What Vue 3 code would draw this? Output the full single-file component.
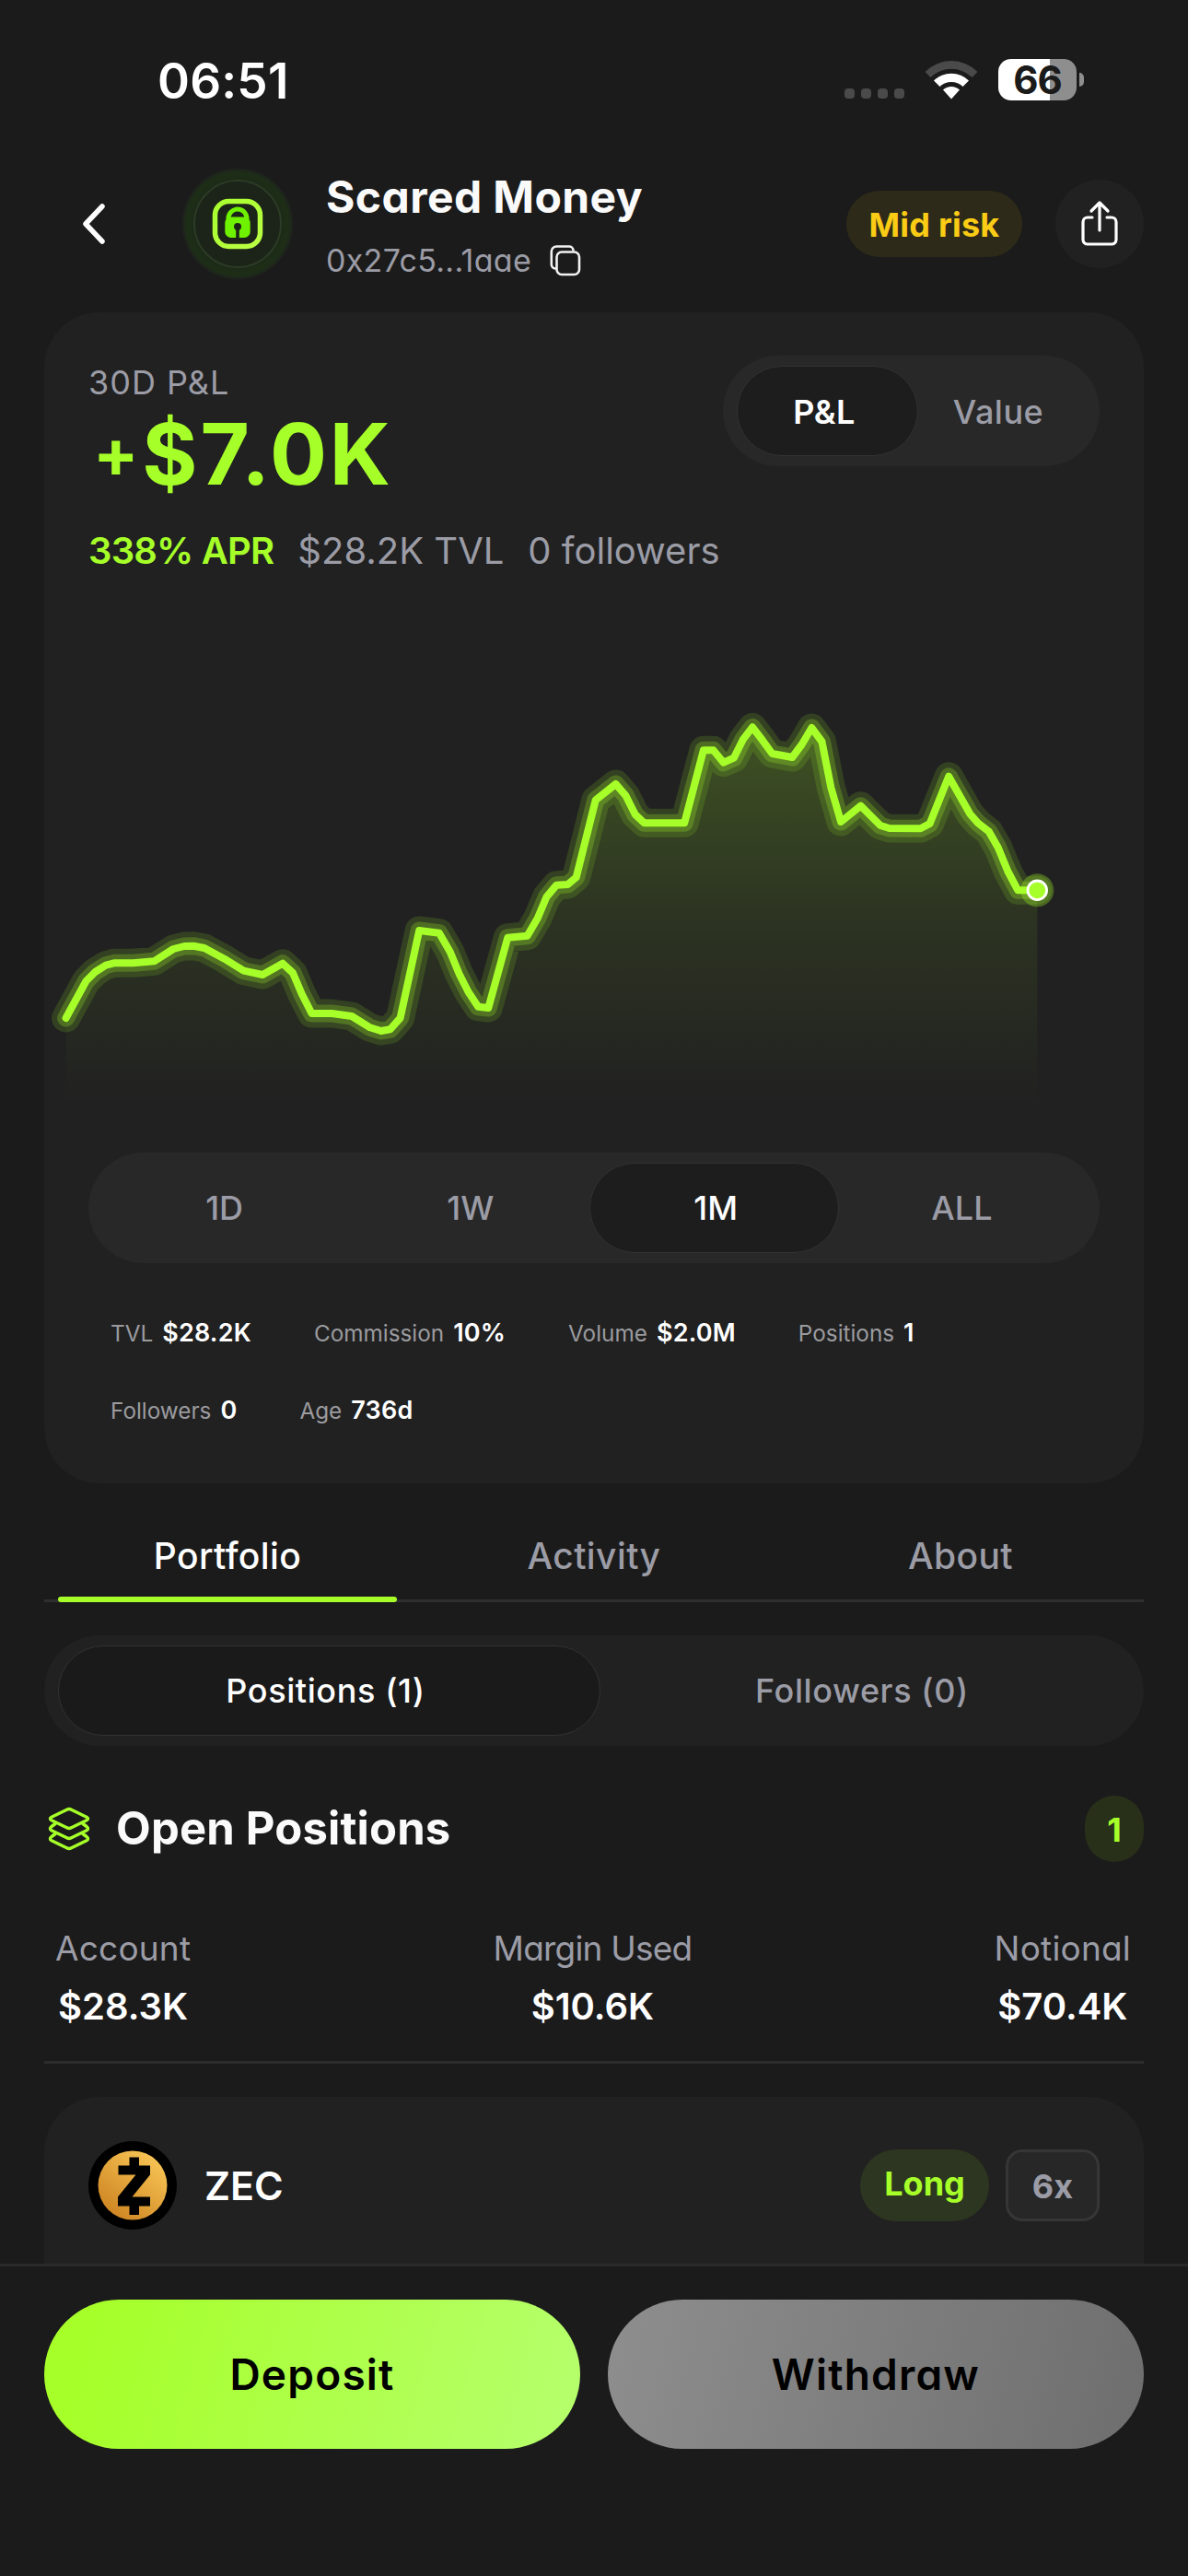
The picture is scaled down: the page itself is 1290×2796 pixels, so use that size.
<template>
  <div class="screen">
    <div class="status">
      <span class="time">06:51</span>
      <div class="status-icons">
        <div class="dots"><i v-for="n in 4" :key="n"></i></div>
        <svg class="wifi" width="58" height="43" viewBox="0 0 58 43">
          <path d="M0.5 13 A40 40 0 0 1 57.5 13 L51.5 19 A32 32 0 0 0 6.500 19 Z" fill="#4a4a4a" />
          <path d="M10 22.500 A27 27 0 0 1 48 22.500 L41.500 29 A18 18 0 0 0 16.500 29 Z" fill="#fff" />
          <path d="M20 32.500 A13 13 0 0 1 38 32.500 L29 42.500 Z" fill="#fff" />
        </svg>
        <div class="battery">
          <div class="cell">66</div>
          <div class="nub"></div>
        </div>
      </div>
    </div>

    <header class="header">
      <button class="back" aria-label="Back">
        <svg width="30" height="48" viewBox="0 0 30 48">
          <path d="M24 5 L6 24 L24 43" fill="none" stroke="#fff" stroke-width="5.500" stroke-linecap="round" stroke-linejoin="round" />
        </svg>
      </button>
      <svg class="avatar" width="122" height="122" viewBox="0 0 122 122">
        <defs>
          <radialGradient id="halo">
            <stop offset="0.76" stop-color="#1c2918" />
            <stop offset="0.9" stop-color="#1d2e16" />
            <stop offset="0.95" stop-color="#1e2a1a" />
            <stop offset="1" stop-color="#1d1f1d" />
          </radialGradient>
          <linearGradient id="frame" x1="0" y1="0" x2="1" y2="1">
            <stop offset="0" stop-color="#a8ff2e" />
            <stop offset="1" stop-color="#baff45" />
          </linearGradient>
        </defs>
        <circle cx="61" cy="61" r="60.500" fill="url(#halo)" />
        <circle cx="61" cy="61" r="47" fill="#1c2419" stroke="#2b3b25" stroke-width="2" />
        <rect x="36.500" y="36.500" width="49" height="49" rx="15" fill="#1c2419" stroke="url(#frame)" stroke-width="5.500" />
        <path d="M51 57 v-2 a10 10 0 0 1 20 0 v2" fill="none" stroke="#6ff200" stroke-width="5" />
        <rect x="47.300" y="53.500" width="27.400" height="22.500" rx="6.500" fill="#6ff200" />
        <circle cx="61" cy="64" r="4" fill="#1c2419" />
        <rect x="59.200" y="66" width="3.600" height="10.500" fill="#1c2419" />
      </svg>
      <div class="who">
        <div class="name">Scared Money</div>
        <div class="address">
          <span>0x27c5...1aae</span>
          <svg width="34" height="34" viewBox="0 0 34 34" fill="none" stroke="#f2f2f2" stroke-width="2.600">
            <path d="M6 25.500 A4.500 4.500 0 0 1 1.800 21 V7 A5.500 5.500 0 0 1 7.300 1.500 H21 A4.500 4.500 0 0 1 25.500 5.500" stroke-linecap="round" />
            <rect x="7.500" y="7.500" width="24.500" height="24.500" rx="5.500" />
          </svg>
        </div>
      </div>
      <div class="risk">Mid risk</div>
      <button class="share" aria-label="Share">
        <svg width="42" height="52" viewBox="0 0 42 52" fill="none" stroke="#fff" stroke-width="3.200" stroke-linecap="round" stroke-linejoin="round">
          <path d="M13 19 H8 A5 5 0 0 0 3 24 V43 A5 5 0 0 0 8 48 H34 A5 5 0 0 0 39 43 V24 A5 5 0 0 0 34 19 H29" />
          <path d="M21 33 V3.500 M12 12 L21 3 L30 12" />
        </svg>
      </button>
    </header>

    <section class="card">
      <div class="card-top">
        <div class="summary">
          <div class="label">30D P&amp;L</div>
          <div class="pnl"><span class="sign">+</span>$7.0K</div>
          <div class="meta">
            <span class="apr">338% APR</span>
            <span class="tvl">$28.2K TVL</span>
            <span class="fol">0 followers</span>
          </div>
        </div>
        <div class="toggle">
          <div class="toggle-item active">P&amp;L</div>
          <div class="toggle-item">Value</div>
        </div>
      </div>

      <svg class="chart" width="1194" height="631" viewBox="48 620 1194 631">
        <defs>
          <linearGradient id="area" gradientUnits="userSpaceOnUse" x1="0" y1="790" x2="0" y2="1200">
            <stop offset="0" stop-color="#a6ff29" stop-opacity="0.22" />
            <stop offset="0.5" stop-color="#a6ff29" stop-opacity="0.085" />
            <stop offset="1" stop-color="#a6ff29" stop-opacity="0" />
          </linearGradient>
        </defs>
        <path :d="areaPath" fill="url(#area)" />
        <g fill="none" stroke="#a6ff29" stroke-linecap="round" stroke-linejoin="round">
          <path :d="linePath" stroke-width="31" stroke-opacity="0.14" />
          <path :d="linePath" stroke-width="19" stroke-opacity="0.24" />
          <path :d="linePath" stroke-width="8" />
        </g>
        <circle :cx="last[0]" :cy="last[1]" r="18" fill="#a6ff29" fill-opacity="0.3" />
        <circle :cx="last[0]" :cy="last[1]" r="10.300" fill="#a6ff29" stroke="#fff" stroke-width="2.800" />
      </svg>

      <div class="periods">
        <div v-for="p in periods" :key="p" class="period" :class="{ active: p === '1M' }">{{ p }}</div>
      </div>

      <div class="stats">
        <div v-for="s in stats" :key="s.label" class="stat">
          <span class="stat-label">{{ s.label }}</span>
          <span class="stat-value">{{ s.value }}</span>
        </div>
      </div>
    </section>

    <nav class="tabs">
      <div class="tab active">Portfolio</div>
      <div class="tab">Activity</div>
      <div class="tab">About</div>
    </nav>

    <div class="segments">
      <div class="segment active">Positions (1)</div>
      <div class="segment">Followers (0)</div>
    </div>

    <div class="section-head">
      <svg width="54" height="54" viewBox="0 0 54 54" fill="none" stroke="#a6ff29" stroke-width="3.500" stroke-linejoin="round" stroke-linecap="round">
        <path d="M24.500 6.200 Q27 4.800 29.500 6.200 L46 14.300 Q49 16 46 17.700 L29.500 25.800 Q27 27.200 24.500 25.800 L8 17.700 Q5 16 8 14.300 Z" />
        <path d="M12 21.500 L8 24.500 Q5 27 8 28.700 L24.500 36.800 Q27 38.200 29.500 36.800 L46 28.700 Q49 27 46 24.500 L42 21.500" />
        <path d="M12 32.500 L8 35.500 Q5 38 8 39.700 L24.500 47.800 Q27 49.200 29.500 47.800 L46 39.700 Q49 38 46 35.500 L42 32.500" />
      </svg>
      <h2>Open Positions</h2>
      <div class="count">1</div>
    </div>

    <div class="totals">
      <div v-for="t in totals" :key="t.label" class="total">
        <div class="total-label">{{ t.label }}</div>
        <div class="total-value">{{ t.value }}</div>
      </div>
    </div>

    <section class="position">
      <svg width="96" height="96" viewBox="0 0 96 96">
        <defs>
          <linearGradient id="zec" x1="0.8" y1="0.1" x2="0.2" y2="0.9">
            <stop offset="0" stop-color="#f6c253" />
            <stop offset="1" stop-color="#cf8724" />
          </linearGradient>
        </defs>
        <circle cx="48" cy="48" r="48" fill="#000" />
        <circle cx="48" cy="48" r="37.500" fill="url(#zec)" />
        <path d="M44.500 17.500 h10.500 v9 h12 v10 L47.500 60.500 h19.500 v10 h-12 v9.500 h-10.500 v-9.500 h-12.500 v-10 L51.500 36.500 h-19 v-10 h12 z" fill="#000" />
      </svg>
      <span class="symbol">ZEC</span>
      <span class="side">Long</span>
      <span class="leverage">6x</span>
    </section>

    <footer class="footer">
      <button class="cta deposit">Deposit</button>
      <button class="cta withdraw">Withdraw</button>
    </footer>
  </div>
</template>

<script setup>
const points = [
  [71.6, 1105], [93.4, 1065], [103.3, 1055], [115, 1047.7], [123.8, 1045.3], [144.8, 1045.3],
  [167.3, 1043.3], [188.3, 1030], [200, 1027], [210, 1026.7], [221.9, 1029], [243.6, 1040.7],
  [264.6, 1053.7], [285.2, 1058], [306.9, 1045.7], [318, 1056], [327.9, 1079.3], [338.5, 1100],
  [360.3, 1100], [382, 1103], [401.8, 1115.3], [413.7, 1119], [423.6, 1117.3], [434.6, 1105],
  [455.2, 1010], [476.9, 1012.7], [488.8, 1033.3], [498.7, 1057.3], [508.6, 1076.7], [519.2, 1092.7],
  [530.3, 1094], [551.3, 1017.7], [572.6, 1015.7], [583.7, 996.7], [593.6, 973.3], [604.3, 960.7],
  [616.5, 960], [625.7, 952.2], [646.8, 868.3], [668.6, 851], [679.3, 863.3], [689.7, 884],
  [699.6, 893.3], [743.2, 893.3], [763.9, 814.3], [774.6, 814.3], [785.7, 827.7], [796.8, 822.7],
  [806.8, 802.7], [817, 789.3], [827.8, 803.3], [838.5, 818], [860.3, 822], [870.7, 808],
  [881.4, 790], [892.5, 805], [902.4, 855], [913.1, 892], [934.6, 874.7], [956, 896],
  [965.6, 899], [999.6, 899.3], [1009.6, 894], [1030.2, 842.7], [1053.2, 883.3], [1062, 893.3],
  [1073.9, 902.7], [1083.8, 920], [1094.5, 946], [1105.3, 966.3], [1126.3, 966.3]
]
const last = points[points.length - 1]
const linePath = 'M' + points.map(p => p.join(',')).join(' L')
const areaPath = `${linePath} L${last[0]},1200 L${points[0][0]},1200 Z`

const periods = ['1D', '1W', '1M', 'ALL']

const stats = [
  { label: 'TVL', value: '$28.2K' },
  { label: 'Commission', value: '10%' },
  { label: 'Volume', value: '$2.0M' },
  { label: 'Positions', value: '1' },
  { label: 'Followers', value: '0' },
  { label: 'Age', value: '736d' }
]

const totals = [
  { label: 'Account', value: '$28.3K' },
  { label: 'Margin Used', value: '$10.6K' },
  { label: 'Notional', value: '$70.4K' }
]
</script>

<style>
body {
  background: #1b1b1b;
}
</style>

<style scoped>
.screen {
  width: 1290px;
  height: 2796px;
  overflow: hidden;
  background: #1b1b1b;
  color: #fff;
  font-family: Inter, "Liberation Sans", sans-serif;
  font-feature-settings: "cv11" 1;
  display: flex;
  flex-direction: column;
  white-space: nowrap;
}

.screen > * {
  flex-shrink: 0;
}

button {
  border: 0;
  padding: 0;
  background: none;
  font: inherit;
  font-feature-settings: inherit;
  color: inherit;
}

svg {
  display: block;
  flex-shrink: 0;
}

/* Status bar */
.status {
  height: 173px;
  padding: 0 113px 0 171px;
  display: flex;
  align-items: center;
  justify-content: space-between;
}

.time {
  font-size: 53px;
  font-weight: 600;
  letter-spacing: 0.2px;
  line-height: 60px;
  padding-top: 2px;
}

.status-icons {
  display: flex;
  align-items: center;
}

.dots {
  display: flex;
  gap: 7px;
  padding-top: 30px;
}

.dots i {
  width: 11px;
  height: 11px;
  border-radius: 4px;
  background: #4a4a4a;
}

.wifi {
  margin: 0 22px;
}

.battery {
  display: flex;
  align-items: center;
  gap: 3px;
}

.cell {
  width: 85px;
  height: 45px;
  border-radius: 14px;
  background: linear-gradient(90deg, #fff 66%, #8e8e8e 66%);
  color: #1b1b1b;
  font-size: 42px;
  font-weight: 700;
  line-height: 46px;
  text-align: center;
  letter-spacing: -1px;
}

.nub {
  width: 5px;
  height: 15px;
  border-radius: 0 5px 5px 0;
  background: #8e8e8e;
}

/* Header */
.header {
  height: 120px;
  margin-top: 10px;
  padding: 0 48px;
  display: flex;
  align-items: center;
}

.back {
  width: 108px;
  height: 108px;
  display: flex;
  align-items: center;
  justify-content: center;
}

.avatar {
  margin-left: 41px;
}

.who {
  margin-left: 35px;
  padding-top: 10px;
}

.name {
  font-size: 48px;
  font-weight: 700;
  letter-spacing: 0.4px;
  line-height: 61px;
  color: #fafafa;
}

.address {
  display: flex;
  align-items: center;
  gap: 20px;
  margin-top: 9px;
  font-size: 34px;
  letter-spacing: 0.3px;
  line-height: 60px;
  color: #9b9ca6;
}

.risk {
  margin-left: auto;
  width: 191px;
  height: 72px;
  border-radius: 36px;
  background: #2e2a19;
  color: #facc15;
  font-size: 36px;
  font-weight: 700;
  letter-spacing: 0.2px;
  line-height: 74px;
  text-align: center;
}

.share {
  width: 96px;
  height: 96px;
  margin-left: 36px;
  border-radius: 50%;
  background: #212121;
  display: flex;
  align-items: center;
  justify-content: center;
}

/* Chart card */
.card {
  height: 1271px;
  margin: 36px 48px 0;
  padding: 47px 48px 0;
  box-sizing: border-box;
  border-radius: 60px;
  background: #212121;
}

.card-top {
  display: flex;
  justify-content: space-between;
  height: 234px;
}

.summary {
  padding-top: 7px;
}

.label {
  font-size: 36px;
  letter-spacing: 1px;
  line-height: 44px;
  color: #9b9ca6;
}

.pnl {
  height: 100px;
  margin-top: 6px;
  padding-left: 5px;
  font-size: 92px;
  font-weight: 700;
  letter-spacing: 2.8px;
  line-height: 100px;
  color: #a6ff29;
}

.sign {
  margin-right: 1px;
  font-size: 73px;
  line-height: 1;
  vertical-align: 8px;
}

.meta {
  display: flex;
  gap: 26px;
  margin-top: 33px;
  font-size: 40px;
  line-height: 44px;
  color: #9b9ca6;
}

.apr {
  color: #a6ff29;
  font-weight: 600;
  letter-spacing: -0.8px;
}

.toggle,
.periods,
.segments {
  height: 120px;
  box-sizing: border-box;
  border-radius: 60px;
  background: #282828;
  padding: 11px 15px;
  font-feature-settings: normal;
  font-weight: 500;
  font-size: 36px;
  color: #9b9ca6;
}

.toggle {
  width: 409px;
  display: flex;
}

.toggle-item,
.period,
.segment {
  flex: 1;
  height: 98px;
  box-sizing: border-box;
  border: 1px solid transparent;
  border-radius: 49px;
  line-height: 97px;
  text-align: center;
}

.toggle-item.active,
.period.active,
.segment.active {
  background: #1d1d1d;
  border-color: #323232;
  color: #fff;
}

.toggle-item {
  flex: 0 0 174px;
  letter-spacing: 0.5px;
  line-height: 99px;
}

.toggle-item.active {
  flex: 0 0 197px;
  padding-right: 7px;
  font-weight: 600;
}

.period.active {
  margin-left: -5px;
  padding-left: 4px;
}

.chart {
  margin: 0 -48px;
}

.periods,
.segments {
  display: flex;
}

.periods {
  padding: 11px 16px 11px 14px;
}

.stats {
  display: flex;
  flex-wrap: wrap;
  gap: 40px 68px;
  margin-top: 54px;
  padding: 0 24px;
}

.stat {
  display: flex;
  align-items: baseline;
  gap: 10px;
  line-height: 44px;
}

.stat-label {
  font-size: 24.3px;
  color: #9b9b9f;
}

.stat-value {
  font-size: 27px;
  font-weight: 600;
  letter-spacing: 0.2px;
}

/* Tabs */
.tabs {
  display: flex;
  height: 100px;
  box-sizing: border-box;
  margin: 29px 48px 0;
  border-bottom: 3px solid #2f2f2f;
  font-size: 39px;
  font-weight: 500;
  font-feature-settings: normal;
  letter-spacing: 0.4px;
  color: #9b9ca6;
}

.tab {
  position: relative;
  flex: 1;
  line-height: 100px;
  text-align: center;
}

.tab.active {
  color: #fff;
}

.tab.active::after {
  content: "";
  position: absolute;
  left: 15px;
  right: 15px;
  bottom: -3px;
  height: 6px;
  border-radius: 3px;
  background: #a6ff29;
}

.segments {
  margin: 36px 48px 0;
  background: #212121;
  letter-spacing: 0.6px;
}

.segment {
  flex: 0 0 582px;
}

.segment.active {
  flex-basis: 589px;
  margin-right: -7px;
  padding-right: 8px;
  background: #1a1a1a;
}

/* Open positions */
.section-head {
  display: flex;
  align-items: center;
  height: 72px;
  margin: 54px 48px 0;
}

h2 {
  margin: 0 auto 0 24px;
  font-size: 49px;
  font-weight: 700;
  letter-spacing: 0.15px;
  line-height: 60px;
  color: #fafafa;
}

.count {
  width: 64px;
  height: 72px;
  border-radius: 32px;
  background: #29301a;
  color: #a6ff29;
  font-size: 36px;
  font-weight: 700;
  line-height: 74px;
  text-align: center;
}

.totals {
  display: flex;
  justify-content: space-between;
  margin: 72px 48px 0;
  padding: 0 14px 37px 12px;
  border-bottom: 3px solid #2c2c2c;
}

.total {
  text-align: center;
}

.total-label {
  font-size: 37px;
  letter-spacing: 0.2px;
  line-height: 44px;
  color: #9b9ca6;
}

.total:nth-child(2) .total-label {
  letter-spacing: -0.8px;
}

.total-value {
  margin-top: 19px;
  font-size: 40px;
  font-weight: 600;
  line-height: 44px;
}

.position {
  display: flex;
  align-items: center;
  height: 181px;
  box-sizing: border-box;
  margin: 36px 48px 0;
  padding: 10px 48px 0;
  border-radius: 60px 60px 0 0;
  background: #212121;
}

.symbol {
  margin: 0 auto 0 30px;
  font-size: 43px;
  font-weight: 600;
}

.side {
  width: 140px;
  height: 78px;
  border-radius: 39px;
  background: #2d3620;
  color: #a6ff29;
  font-size: 36px;
  font-weight: 700;
  line-height: 74px;
  text-align: center;
}

.leverage {
  width: 102px;
  height: 78px;
  box-sizing: border-box;
  margin-left: 18px;
  border: 3px solid #363636;
  border-radius: 18px;
  background: #272727;
  color: #9b9ca6;
  font-size: 36px;
  font-weight: 700;
  line-height: 74px;
  text-align: center;
}

/* Bottom actions */
.footer {
  flex: 1;
  display: flex;
  gap: 30px;
  padding: 36px 48px 0;
  border-top: 3px solid #2a2a2a;
  background: #1b1b1b;
}

.cta {
  flex: 1;
  height: 162px;
  border-radius: 81px;
  color: #000;
  font-size: 46px;
  font-weight: 600;
  letter-spacing: 1.2px;
}

.deposit {
  background: linear-gradient(105deg, #a6ff29 10%, #b6ff6e 100%);
}

.withdraw {
  background: linear-gradient(105deg, #8e8e8e 0%, #6e6e6e 100%);
}
</style>
